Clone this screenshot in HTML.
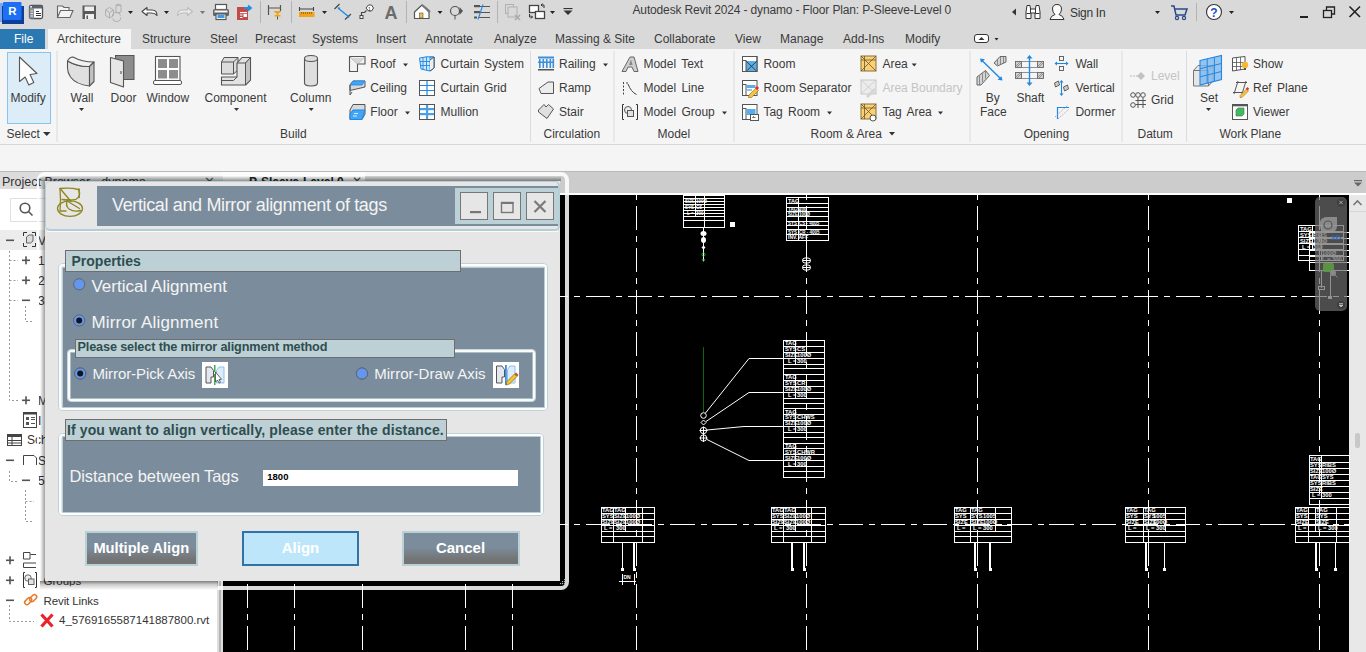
<!DOCTYPE html>
<html><head><meta charset="utf-8">
<style>
*{margin:0;padding:0;box-sizing:border-box}
html,body{width:1366px;height:652px;overflow:hidden;background:#f5f5f5;font-family:"Liberation Sans",sans-serif;color:#333;position:relative}
.a{position:absolute;white-space:nowrap}
.t12{position:absolute;white-space:nowrap;font-size:12px;line-height:12px;color:#3a3a3a}
svg{position:absolute;overflow:visible}
</style></head><body>
<!-- BACKGROUND BLOCKS -->
<div class="a" style="left:0;top:0;width:1366px;height:49px;background:#d9d9d9"></div>
<div class="a" style="left:0;top:29px;width:45px;height:20px;background:#2b79b3"></div>
<div class="a" style="left:48px;top:29px;width:83px;height:20px;background:#f5f5f5"></div>
<div class="a" style="left:0;top:49px;width:1366px;height:96px;background:#f5f5f5;border-bottom:1px solid #d8d8d8"></div>
<div class="a" style="left:0;top:146px;width:1366px;height:25px;background:#f5f5f5"></div>
<!--OPTS-->
<!-- view tab bar -->
<div class="a" style="left:0;top:171px;width:1366px;height:22px;background:#cccccc;border-top:1px solid #b9b9b9"></div>
<div class="a" style="left:222px;top:172px;width:143px;height:21px;background:#f0f0f0"></div>
<div class="a" style="left:222px;top:193px;width:1144px;height:2px;background:#fff"></div>
<!-- project browser -->
<div class="a" style="left:0;top:172px;width:218px;height:17px;background:#dcdcdc"></div>
<div class="t12" style="left:2px;top:176px;color:#333;font-size:12.5px">Project Browser - dynamo</div><div class="a" style="left:204px;top:175px;font-size:13px;line-height:13px;color:#555">&#x2715;</div>
<div class="a" style="left:0;top:189px;width:218px;height:463px;background:#fff"></div>
<div class="a" style="left:10px;top:198px;width:200px;height:24px;background:#fff;border:1px solid #e0e0e0"></div>
<div class="a" style="left:0;top:230px;width:218px;height:20px;background:#ececec"></div>
<div class="a" style="left:217px;top:172px;width:6px;height:480px;background:#dedede"></div>
<div class="a" style="left:219px;top:195px;width:2px;height:457px;background:#b4b4b4"></div>
<svg style="left:0;top:189px" width="222" height="463" viewBox="0 189 222 463">
<g fill="none" stroke="#555" stroke-width="1.6"><circle cx="25" cy="208" r="4.8"/><path d="M28.5 211.5 l4 4"/></g>
<g stroke="#9a9a9a" stroke-width="1" stroke-dasharray="2 2" fill="none">
<path d="M9.5 251 V400.5 H18"/><path d="M9.5 260.5 H18 M9.5 280.5 H18 M9.5 300.5 H18"/>
<path d="M25.5 306 V321.5 H34"/>
<path d="M9.5 471 V481.5 H18"/>
<path d="M25.5 490 V521.5 H34 M25.5 501.5 H34"/>
<path d="M9.5 605 V621.5 H34"/>
</g>
<g fill="#555">
<rect x="6" y="239.5" width="8" height="1.6"/>
<rect x="22" y="259.5" width="8" height="1.6"/><rect x="25.2" y="256.3" width="1.6" height="8"/>
<rect x="22" y="279.5" width="8" height="1.6"/><rect x="25.2" y="276.3" width="1.6" height="8"/>
<rect x="22" y="299.5" width="8" height="1.6"/>
<rect x="22" y="399.5" width="8" height="1.6"/><rect x="25.2" y="396.3" width="1.6" height="8"/>
<rect x="6" y="459.5" width="8" height="1.6"/>
<rect x="22" y="479.5" width="8" height="1.6"/>
<rect x="6" y="559.5" width="8" height="1.6"/><rect x="9.2" y="556.3" width="1.6" height="8"/>
<rect x="6" y="579.5" width="8" height="1.6"/><rect x="9.2" y="576.3" width="1.6" height="8"/>
<rect x="6" y="599.5" width="8" height="1.6"/>
</g>
<!-- views icon -->
<path d="M23.5 236 V232.5 H27 M32 232.5 H35.5 V236 M35.5 243 V246.5 H32 M27 246.5 H23.5 V243" stroke="#333" stroke-width="1" fill="none"/>
<path d="M26.5 237 l2.5 -2 h4 v6 l-2.5 2 h-4z" fill="#ddd" stroke="#555" stroke-width=".9"/>
<!-- sheet icon 420 -->
<rect x="23.5" y="412.5" width="13" height="15" fill="#fff" stroke="#444" stroke-width="1"/><rect x="23.5" y="412.5" width="13" height="2" fill="#444"/>
<g fill="#555"><rect x="26" y="417" width="3" height="3"/><rect x="26" y="422" width="3" height="3"/><rect x="31" y="417" width="4" height="1"/><rect x="31" y="419" width="4" height="1"/><rect x="31" y="423" width="4" height="1"/></g>
<!-- schedule icon 440 -->
<rect x="7.5" y="434.5" width="14" height="11" fill="#fff" stroke="#444" stroke-width="1"/><rect x="7.5" y="434.5" width="14" height="2.5" fill="#444"/>
<path d="M7.5 440.5 H21.5 M7.5 443 H21.5 M12 437 V445.5" stroke="#444" stroke-width="1"/>
<!-- sheet 460 -->
<path d="M23.5 455.5 H34 L36.5 458 V465" fill="none" stroke="#444" stroke-width="1"/><path d="M23.5 455.5 V465" stroke="#444" stroke-width="1"/>
<!-- icon 560 -->
<path d="M23.5 552.5 H30 V559 H23.5 Z M30.5 554.5 H36 M23.5 563 H36 M23.5 563 V567.5 H36" fill="none" stroke="#444" stroke-width="1"/>
<!-- groups icon -->
<path d="M25 572.5 H23.5 V587.5 H25 M35 572.5 H36.5 V587.5 H35" fill="none" stroke="#333" stroke-width="1"/>
<circle cx="28" cy="578" r="3.2" fill="#eee" stroke="#555" stroke-width=".9"/><rect x="28.5" y="579" width="5.5" height="5.5" fill="#e4e4e4" stroke="#555" stroke-width=".9"/>
<!-- link icon -->
<g fill="none" stroke="#e87a2a" stroke-width="1.5"><rect x="24" y="599" width="8" height="4.5" rx="2.2" transform="rotate(-45 28 601)"/><rect x="29" y="596" width="8" height="4.5" rx="2.2" transform="rotate(-45 33 598)"/></g>
<!-- red x -->
<path d="M41.5 614.5 L52.5 626.5 M52.5 614.5 L41.5 626.5" stroke="#e8232a" stroke-width="3.2"/>
</svg>
<div class="t12" style="left:27px;top:434.4px;color:#333">Schedules</div>
<div class="t12" style="left:43.5px;top:594.6px;color:#333;font-size:11.5px;letter-spacing:-0.1px">Revit Links</div>
<div class="t12" style="left:59px;top:613.9px;color:#333;font-size:11.5px">4_5769165587141887800.rvt</div>
<div class="t12" style="left:38px;top:234.6px;color:#333">Views (all)</div>
<div class="t12" style="left:38px;top:254.6px;color:#333">1 - Floor Plans</div>
<div class="t12" style="left:38px;top:274.6px;color:#333">2 - Ceiling Plans</div>
<div class="t12" style="left:38px;top:294.6px;color:#333">3 - Sections</div>
<div class="t12" style="left:38px;top:394.6px;color:#333">M</div>
<div class="t12" style="left:38px;top:414.6px;color:#333">I</div>
<div class="t12" style="left:38px;top:454.6px;color:#333">S</div>
<div class="t12" style="left:38px;top:474.6px;color:#333">5</div>
<div class="t12" style="left:249px;top:175.5px;color:#222;font-weight:bold">P-Sleeve-Level 0</div>
<div class="a" style="left:352px;top:175px;font-size:12px;line-height:12px;color:#444">&#x2715;</div>
<div class="t12" style="left:43.5px;top:574.6px;color:#333;font-size:11.5px">Groups</div>
<!-- scrollbar -->
<div class="a" style="left:1349px;top:195px;width:17px;height:457px;background:#e8e8e8"></div>
<div class="a" style="left:1349px;top:211px;width:17px;height:1px;background:#d6d6d6"></div>
<div class="a" style="left:1355px;top:433px;width:5px;height:15px;background:#c8c8c8;border-radius:2px"></div>
<svg style="left:1349px;top:171px" width="17" height="45" viewBox="1349 171 17 45">
<path d="M1353.5 205 L1357.5 201 L1361.5 205" fill="none" stroke="#777" stroke-width="1.6"/>
<rect x="1354" y="180" width="8" height="1.2" fill="#666"/><path d="M1354 182.5 h8 l-4 4z" fill="#666"/>
</svg>

<!--CANVAS--><div class="a" style="left:223px;top:195px;width:1126px;height:457px;background:#000"></div>
<svg style="left:223px;top:195px" width="1126" height="457" viewBox="223 195 1126 457" shape-rendering="crispEdges">
<path d="M247.5 195V200M247.5 206V230M247.5 236V242M247.5 248V272M247.5 278V284M247.5 290V314M247.5 320V326M247.5 332V356M247.5 362V368M247.5 374V398M247.5 404V410M247.5 416V440M247.5 446V452M247.5 458V482M247.5 488V494M247.5 500V524M247.5 530V536M247.5 542V566M247.5 572V578M247.5 584V608M247.5 614V620M247.5 626V650M294.5 195V200M294.5 206V230M294.5 236V242M294.5 248V272M294.5 278V284M294.5 290V314M294.5 320V326M294.5 332V356M294.5 362V368M294.5 374V398M294.5 404V410M294.5 416V440M294.5 446V452M294.5 458V482M294.5 488V494M294.5 500V524M294.5 530V536M294.5 542V566M294.5 572V578M294.5 584V608M294.5 614V620M294.5 626V650M362.5 195V200M362.5 206V230M362.5 236V242M362.5 248V272M362.5 278V284M362.5 290V314M362.5 320V326M362.5 332V356M362.5 362V368M362.5 374V398M362.5 404V410M362.5 416V440M362.5 446V452M362.5 458V482M362.5 488V494M362.5 500V524M362.5 530V536M362.5 542V566M362.5 572V578M362.5 584V608M362.5 614V620M362.5 626V650M465.5 195V200M465.5 206V230M465.5 236V242M465.5 248V272M465.5 278V284M465.5 290V314M465.5 320V326M465.5 332V356M465.5 362V368M465.5 374V398M465.5 404V410M465.5 416V440M465.5 446V452M465.5 458V482M465.5 488V494M465.5 500V524M465.5 530V536M465.5 542V566M465.5 572V578M465.5 584V608M465.5 614V620M465.5 626V650M512.5 195V200M512.5 206V230M512.5 236V242M512.5 248V272M512.5 278V284M512.5 290V314M512.5 320V326M512.5 332V356M512.5 362V368M512.5 374V398M512.5 404V410M512.5 416V440M512.5 446V452M512.5 458V482M512.5 488V494M512.5 500V524M512.5 530V536M512.5 542V566M512.5 572V578M512.5 584V608M512.5 614V620M512.5 626V650M636.5 195V200M636.5 206V230M636.5 236V242M636.5 248V272M636.5 278V284M636.5 290V314M636.5 320V326M636.5 332V356M636.5 362V368M636.5 374V398M636.5 404V410M636.5 416V440M636.5 446V452M636.5 458V482M636.5 488V494M636.5 500V524M636.5 530V536M636.5 542V566M636.5 572V578M636.5 584V608M636.5 614V620M636.5 626V650M806.5 195V200M806.5 206V230M806.5 236V242M806.5 248V272M806.5 278V284M806.5 290V314M806.5 320V326M806.5 332V356M806.5 362V368M806.5 374V398M806.5 404V410M806.5 416V440M806.5 446V452M806.5 458V482M806.5 488V494M806.5 500V524M806.5 530V536M806.5 542V566M806.5 572V578M806.5 584V608M806.5 614V620M806.5 626V650M977.5 195V200M977.5 206V230M977.5 236V242M977.5 248V272M977.5 278V284M977.5 290V314M977.5 320V326M977.5 332V356M977.5 362V368M977.5 374V398M977.5 404V410M977.5 416V440M977.5 446V452M977.5 458V482M977.5 488V494M977.5 500V524M977.5 530V536M977.5 542V566M977.5 572V578M977.5 584V608M977.5 614V620M977.5 626V650M1148.5 195V200M1148.5 206V230M1148.5 236V242M1148.5 248V272M1148.5 278V284M1148.5 290V314M1148.5 320V326M1148.5 332V356M1148.5 362V368M1148.5 374V398M1148.5 404V410M1148.5 416V440M1148.5 446V452M1148.5 458V482M1148.5 488V494M1148.5 500V524M1148.5 530V536M1148.5 542V566M1148.5 572V578M1148.5 584V608M1148.5 614V620M1148.5 626V650M1319.5 195V200M1319.5 206V230M1319.5 236V242M1319.5 248V272M1319.5 278V284M1319.5 290V314M1319.5 320V326M1319.5 332V356M1319.5 362V368M1319.5 374V398M1319.5 404V410M1319.5 416V440M1319.5 446V452M1319.5 458V482M1319.5 488V494M1319.5 500V524M1319.5 530V536M1319.5 542V566M1319.5 572V578M1319.5 584V608M1319.5 614V620M1319.5 626V650M223.0 296.5H230.9M236.9 296.5H242.9M248.5 296.5H273.0M279.0 296.5H285.0M290.7 296.5H315.2M321.2 296.5H327.2M332.8 296.5H357.3M363.3 296.5H369.3M374.9 296.5H399.4M405.4 296.5H411.4M417.1 296.5H441.6M447.6 296.5H453.6M459.2 296.5H483.8M489.8 296.5H495.8M501.4 296.5H525.9M531.9 296.5H537.9M543.5 296.5H568.0M574.0 296.5H580.0M585.7 296.5H610.2M616.2 296.5H622.2M627.9 296.5H652.4M658.4 296.5H664.4M670.0 296.5H694.5M700.5 296.5H706.5M712.1 296.5H736.6M742.6 296.5H748.6M754.3 296.5H778.8M784.8 296.5H790.8M796.5 296.5H821.0M827.0 296.5H833.0M838.6 296.5H863.1M869.1 296.5H875.1M880.8 296.5H905.2M911.2 296.5H917.2M922.9 296.5H947.4M953.4 296.5H959.4M965.0 296.5H989.5M995.5 296.5H1001.5M1007.2 296.5H1031.7M1037.7 296.5H1043.7M1049.3 296.5H1073.8M1079.8 296.5H1085.8M1091.5 296.5H1116.0M1122.0 296.5H1128.0M1133.7 296.5H1158.2M1164.2 296.5H1170.2M1175.8 296.5H1200.3M1206.3 296.5H1212.3M1217.9 296.5H1242.4M1248.4 296.5H1254.4M1260.1 296.5H1284.6M1290.6 296.5H1296.6M1302.2 296.5H1326.8M1332.8 296.5H1338.8M1344.4 296.5H1349.0M223.0 524.5H230.9M236.9 524.5H242.9M248.5 524.5H273.0M279.0 524.5H285.0M290.7 524.5H315.2M321.2 524.5H327.2M332.8 524.5H357.3M363.3 524.5H369.3M374.9 524.5H399.4M405.4 524.5H411.4M417.1 524.5H441.6M447.6 524.5H453.6M459.2 524.5H483.8M489.8 524.5H495.8M501.4 524.5H525.9M531.9 524.5H537.9M543.5 524.5H568.0M574.0 524.5H580.0M585.7 524.5H610.2M616.2 524.5H622.2M627.9 524.5H652.4M658.4 524.5H664.4M670.0 524.5H694.5M700.5 524.5H706.5M712.1 524.5H736.6M742.6 524.5H748.6M754.3 524.5H778.8M784.8 524.5H790.8M796.5 524.5H821.0M827.0 524.5H833.0M838.6 524.5H863.1M869.1 524.5H875.1M880.8 524.5H905.2M911.2 524.5H917.2M922.9 524.5H947.4M953.4 524.5H959.4M965.0 524.5H989.5M995.5 524.5H1001.5M1007.2 524.5H1031.7M1037.7 524.5H1043.7M1049.3 524.5H1073.8M1079.8 524.5H1085.8M1091.5 524.5H1116.0M1122.0 524.5H1128.0M1133.7 524.5H1158.2M1164.2 524.5H1170.2M1175.8 524.5H1200.3M1206.3 524.5H1212.3M1217.9 524.5H1242.4M1248.4 524.5H1254.4M1260.1 524.5H1284.6M1290.6 524.5H1296.6M1302.2 524.5H1326.8M1332.8 524.5H1338.8M1344.4 524.5H1349.0" stroke="#fff" stroke-width="1.3" fill="none"/>
<rect x="601.5" y="507.5" width="53" height="35" fill="none" stroke="#fff" stroke-width="1"/><path d="M601 513.5H654M601 519.5H654M601 525.5H654M601 531.5H654M601 536.5H654M613.5 507V542M625.5 507V531M642.5 507V542M636.5 531V536" stroke="#fff" stroke-width="1" fill="none"/><text x="602" y="512.3" font-family="Liberation Sans" font-weight="bold" font-size="5.8" fill="#ffffff" shape-rendering="auto">TAG</text><text x="602" y="518.3" font-family="Liberation Sans" font-weight="bold" font-size="5.8" fill="#ffffff" shape-rendering="auto">SYS</text><text x="602" y="524.3" font-family="Liberation Sans" font-weight="bold" font-size="5.8" fill="#ffffff" shape-rendering="auto">SIZE</text><text x="604" y="530.3" font-family="Liberation Sans" font-weight="bold" font-size="5.8" fill="#ffffff" shape-rendering="auto">L =</text><text x="614" y="512.3" font-family="Liberation Sans" font-weight="bold" font-size="5.8" fill="#ffffff" shape-rendering="auto">TAG</text><text x="614" y="518.3" font-family="Liberation Sans" font-weight="bold" font-size="5.8" fill="#ffffff" shape-rendering="auto">SIZE</text><text x="614" y="524.3" font-family="Liberation Sans" font-weight="bold" font-size="5.8" fill="#ffffff" shape-rendering="auto">SIZE</text><text x="616" y="530.3" font-family="Liberation Sans" font-weight="bold" font-size="5.8" fill="#ffffff" shape-rendering="auto">300</text><text x="626" y="512.3" font-family="Liberation Sans" font-weight="bold" font-size="5.8" fill="#ffffff" shape-rendering="auto"></text><text x="626" y="518.3" font-family="Liberation Sans" font-weight="bold" font-size="5.8" fill="#ffffff" shape-rendering="auto">100Ø</text><text x="626" y="524.3" font-family="Liberation Sans" font-weight="bold" font-size="5.8" fill="#ffffff" shape-rendering="auto">100Ø</text><text x="628" y="530.3" font-family="Liberation Sans" font-weight="bold" font-size="5.8" fill="#ffffff" shape-rendering="auto"></text>
<rect x="771.5" y="507.5" width="54" height="35" fill="none" stroke="#fff" stroke-width="1"/><path d="M771 513.5H825M771 519.5H825M771 525.5H825M771 531.5H825M771 536.5H825M783.5 507V542M795.5 507V531M811.5 507V542" stroke="#fff" stroke-width="1" fill="none"/><text x="772" y="512.3" font-family="Liberation Sans" font-weight="bold" font-size="5.8" fill="#ffffff" shape-rendering="auto">TAG</text><text x="772" y="518.3" font-family="Liberation Sans" font-weight="bold" font-size="5.8" fill="#ffffff" shape-rendering="auto">SYS</text><text x="772" y="524.3" font-family="Liberation Sans" font-weight="bold" font-size="5.8" fill="#ffffff" shape-rendering="auto">SIZE</text><text x="774" y="530.3" font-family="Liberation Sans" font-weight="bold" font-size="5.8" fill="#ffffff" shape-rendering="auto">L =</text><text x="784" y="512.3" font-family="Liberation Sans" font-weight="bold" font-size="5.8" fill="#ffffff" shape-rendering="auto">TAG</text><text x="784" y="518.3" font-family="Liberation Sans" font-weight="bold" font-size="5.8" fill="#ffffff" shape-rendering="auto">SIZE</text><text x="784" y="524.3" font-family="Liberation Sans" font-weight="bold" font-size="5.8" fill="#ffffff" shape-rendering="auto">SIZE</text><text x="786" y="530.3" font-family="Liberation Sans" font-weight="bold" font-size="5.8" fill="#ffffff" shape-rendering="auto">300</text><text x="796" y="512.3" font-family="Liberation Sans" font-weight="bold" font-size="5.8" fill="#ffffff" shape-rendering="auto"></text><text x="796" y="518.3" font-family="Liberation Sans" font-weight="bold" font-size="5.8" fill="#ffffff" shape-rendering="auto">100Ø</text><text x="796" y="524.3" font-family="Liberation Sans" font-weight="bold" font-size="5.8" fill="#ffffff" shape-rendering="auto">100Ø</text><text x="798" y="530.3" font-family="Liberation Sans" font-weight="bold" font-size="5.8" fill="#ffffff" shape-rendering="auto"></text>
<rect x="954.5" y="507.5" width="57" height="35" fill="none" stroke="#fff" stroke-width="1"/><path d="M954 513.5H1011M954 519.5H1011M954 525.5H1011M954 531.5H1011M954 536.5H1011M970.5 507V542M995.5 507V531M977.5 531V542" stroke="#fff" stroke-width="1" fill="none"/><text x="955" y="512.3" font-family="Liberation Sans" font-weight="bold" font-size="5.8" fill="#ffffff" shape-rendering="auto">TAG</text><text x="955" y="518.3" font-family="Liberation Sans" font-weight="bold" font-size="5.8" fill="#ffffff" shape-rendering="auto">SYS</text><text x="955" y="524.3" font-family="Liberation Sans" font-weight="bold" font-size="5.8" fill="#ffffff" shape-rendering="auto">SIZE</text><text x="957" y="530.3" font-family="Liberation Sans" font-weight="bold" font-size="5.8" fill="#ffffff" shape-rendering="auto">L =</text><text x="971" y="512.3" font-family="Liberation Sans" font-weight="bold" font-size="5.8" fill="#ffffff" shape-rendering="auto">TAG</text><text x="971" y="518.3" font-family="Liberation Sans" font-weight="bold" font-size="5.8" fill="#ffffff" shape-rendering="auto">SYS</text><text x="971" y="524.3" font-family="Liberation Sans" font-weight="bold" font-size="5.8" fill="#ffffff" shape-rendering="auto">SIZE</text><text x="973" y="530.3" font-family="Liberation Sans" font-weight="bold" font-size="5.8" fill="#ffffff" shape-rendering="auto">L = 300</text><text x="983" y="512.3" font-family="Liberation Sans" font-weight="bold" font-size="5.8" fill="#ffffff" shape-rendering="auto"></text><text x="983" y="518.3" font-family="Liberation Sans" font-weight="bold" font-size="5.8" fill="#ffffff" shape-rendering="auto">1005</text><text x="983" y="524.3" font-family="Liberation Sans" font-weight="bold" font-size="5.8" fill="#ffffff" shape-rendering="auto">100Ø</text><text x="985" y="530.3" font-family="Liberation Sans" font-weight="bold" font-size="5.8" fill="#ffffff" shape-rendering="auto"></text>
<rect x="1125.5" y="507.5" width="60" height="35" fill="none" stroke="#fff" stroke-width="1"/><path d="M1125 513.5H1185M1125 519.5H1185M1125 525.5H1185M1125 531.5H1185M1125 536.5H1185M1143.5 507V542M1165.5 507V531M1148.5 531V542" stroke="#fff" stroke-width="1" fill="none"/><text x="1126" y="512.3" font-family="Liberation Sans" font-weight="bold" font-size="5.8" fill="#ffffff" shape-rendering="auto">TAG</text><text x="1126" y="518.3" font-family="Liberation Sans" font-weight="bold" font-size="5.8" fill="#ffffff" shape-rendering="auto">SYS</text><text x="1126" y="524.3" font-family="Liberation Sans" font-weight="bold" font-size="5.8" fill="#ffffff" shape-rendering="auto">SIZE</text><text x="1128" y="530.3" font-family="Liberation Sans" font-weight="bold" font-size="5.8" fill="#ffffff" shape-rendering="auto">L =</text><text x="1144" y="512.3" font-family="Liberation Sans" font-weight="bold" font-size="5.8" fill="#ffffff" shape-rendering="auto">TAG</text><text x="1144" y="518.3" font-family="Liberation Sans" font-weight="bold" font-size="5.8" fill="#ffffff" shape-rendering="auto">SYS</text><text x="1144" y="524.3" font-family="Liberation Sans" font-weight="bold" font-size="5.8" fill="#ffffff" shape-rendering="auto">SIZE</text><text x="1146" y="530.3" font-family="Liberation Sans" font-weight="bold" font-size="5.8" fill="#ffffff" shape-rendering="auto">L = 300</text><text x="1153" y="512.3" font-family="Liberation Sans" font-weight="bold" font-size="5.8" fill="#ffffff" shape-rendering="auto"></text><text x="1153" y="518.3" font-family="Liberation Sans" font-weight="bold" font-size="5.8" fill="#ffffff" shape-rendering="auto">1005</text><text x="1153" y="524.3" font-family="Liberation Sans" font-weight="bold" font-size="5.8" fill="#ffffff" shape-rendering="auto">100Ø</text><text x="1155" y="530.3" font-family="Liberation Sans" font-weight="bold" font-size="5.8" fill="#ffffff" shape-rendering="auto"></text>
<rect x="1295.5" y="507.5" width="54" height="35" fill="none" stroke="#fff" stroke-width="1"/><path d="M1295 513.5H1349M1295 519.5H1349M1295 525.5H1349M1295 531.5H1349M1295 536.5H1349M1308.5 507V542M1336.5 507V542M1315.5 507V531" stroke="#fff" stroke-width="1" fill="none"/><text x="1296" y="512.3" font-family="Liberation Sans" font-weight="bold" font-size="5.8" fill="#ffffff" shape-rendering="auto">TAG</text><text x="1296" y="518.3" font-family="Liberation Sans" font-weight="bold" font-size="5.8" fill="#ffffff" shape-rendering="auto">SYS</text><text x="1296" y="524.3" font-family="Liberation Sans" font-weight="bold" font-size="5.8" fill="#ffffff" shape-rendering="auto">SIZE</text><text x="1298" y="530.3" font-family="Liberation Sans" font-weight="bold" font-size="5.8" fill="#ffffff" shape-rendering="auto">L =</text><text x="1316" y="512.3" font-family="Liberation Sans" font-weight="bold" font-size="5.8" fill="#ffffff" shape-rendering="auto">TAG</text><text x="1316" y="518.3" font-family="Liberation Sans" font-weight="bold" font-size="5.8" fill="#ffffff" shape-rendering="auto">SYS</text><text x="1316" y="524.3" font-family="Liberation Sans" font-weight="bold" font-size="5.8" fill="#ffffff" shape-rendering="auto">SIZE</text><text x="1318" y="530.3" font-family="Liberation Sans" font-weight="bold" font-size="5.8" fill="#ffffff" shape-rendering="auto">L = 300</text>
<rect x="1309.5" y="455.5" width="40" height="49" fill="none" stroke="#fff" stroke-width="1"/><path d="M1309 462.5H1349M1309 468.5H1349M1309 474.5H1349M1309 480.5H1349M1309 486.5H1349M1309 492.5H1349M1309 498.5H1349M1321.5 455V498" stroke="#fff" stroke-width="1" fill="none"/>
<text x="1310" y="461" font-family="Liberation Sans" font-weight="bold" font-size="5.8" fill="#ffffff" shape-rendering="auto">TAG</text><text x="1310" y="467" font-family="Liberation Sans" font-weight="bold" font-size="5.8" fill="#ffffff" shape-rendering="auto">SYS</text><text x="1322" y="467" font-family="Liberation Sans" font-weight="bold" font-size="5.8" fill="#ffffff" shape-rendering="auto">RIBS</text><text x="1310" y="473" font-family="Liberation Sans" font-weight="bold" font-size="5.8" fill="#ffffff" shape-rendering="auto">SIZE</text><text x="1322" y="473" font-family="Liberation Sans" font-weight="bold" font-size="5.8" fill="#ffffff" shape-rendering="auto">100Ø</text><text x="1310" y="479" font-family="Liberation Sans" font-weight="bold" font-size="5.8" fill="#ffffff" shape-rendering="auto">TAG</text><text x="1322" y="479" font-family="Liberation Sans" font-weight="bold" font-size="5.8" fill="#ffffff" shape-rendering="auto">SYS</text><text x="1310" y="485" font-family="Liberation Sans" font-weight="bold" font-size="5.8" fill="#ffffff" shape-rendering="auto">SYS</text><text x="1322" y="485" font-family="Liberation Sans" font-weight="bold" font-size="5.8" fill="#ffffff" shape-rendering="auto">RIBS</text><text x="1310" y="491" font-family="Liberation Sans" font-weight="bold" font-size="5.8" fill="#ffffff" shape-rendering="auto">SIZE</text><text x="1312" y="497" font-family="Liberation Sans" font-weight="bold" font-size="5.8" fill="#ffffff" shape-rendering="auto">L = 300</text>
<path d="M622.5 543V569M634 543V569M792 543V569M804 543V569M975 543V569M990 543V569M1146 543V569M1164.5 543V569M1316 543V569M1335.5 543V569" stroke="#fff" stroke-width="1.1" fill="none"/>
<rect x="621.0" y="568" width="3" height="3" fill="#fff"/><rect x="632.5" y="568" width="3" height="3" fill="#fff"/><rect x="790.5" y="568" width="3" height="3" fill="#fff"/><rect x="802.5" y="568" width="3" height="3" fill="#fff"/><rect x="973.5" y="568" width="3" height="3" fill="#fff"/><rect x="988.5" y="568" width="3" height="3" fill="#fff"/><rect x="1144.5" y="568" width="3" height="3" fill="#fff"/><rect x="1163.0" y="568" width="3" height="3" fill="#fff"/><rect x="1314.5" y="568" width="3" height="3" fill="#fff"/><rect x="1334.0" y="568" width="3" height="3" fill="#fff"/>
<path d="M619 581.5H636 M622.5 574V585 M634 574V585" stroke="#fff" stroke-width="1" fill="none"/><text x="623.5" y="579" font-family="Liberation Sans" font-weight="bold" font-size="5" fill="#ffffff" shape-rendering="auto">DN</text>
<rect x="783.5" y="340.5" width="41" height="137" fill="none" stroke="#fff" stroke-width="1"/><path d="M783 346.5H824M783 352.5H824M783 358.5H824M783 364.5H824M783 368.5H824M783 374.5H824M783 380.5H824M783 386.5H824M783 392.5H824M783 398.5H824M783 403.5H824M783 408.5H824M783 414.5H824M783 420.5H824M783 426.5H824M783 432.5H824M783 437.5H824M783 443.5H824M783 448.5H824M783 454.5H824M783 460.5H824M783 466.5H824M783 471.5H824M795.5 340V364M795.5 374V398M795.5 408V432M795.5 443V466" stroke="#fff" stroke-width="1" fill="none"/>
<text x="785" y="345.0" font-family="Liberation Sans" font-weight="bold" font-size="5.8" fill="#ffffff" shape-rendering="auto">TAG</text><text x="785" y="350.8" font-family="Liberation Sans" font-weight="bold" font-size="5.8" fill="#ffffff" shape-rendering="auto">SYS</text><text x="797" y="350.8" font-family="Liberation Sans" font-weight="bold" font-size="5.8" fill="#ffffff" shape-rendering="auto">CS</text><text x="785" y="356.8" font-family="Liberation Sans" font-weight="bold" font-size="5.8" fill="#ffffff" shape-rendering="auto">SIZE</text><text x="797" y="356.8" font-family="Liberation Sans" font-weight="bold" font-size="5.8" fill="#ffffff" shape-rendering="auto">100Ø</text><text x="788" y="362.8" font-family="Liberation Sans" font-weight="bold" font-size="5.8" fill="#ffffff" shape-rendering="auto">L =</text><text x="797" y="362.8" font-family="Liberation Sans" font-weight="bold" font-size="5.8" fill="#ffffff" shape-rendering="auto">300</text><text x="785" y="379.25" font-family="Liberation Sans" font-weight="bold" font-size="5.8" fill="#ffffff" shape-rendering="auto">TAG</text><text x="785" y="385.05" font-family="Liberation Sans" font-weight="bold" font-size="5.8" fill="#ffffff" shape-rendering="auto">SYS</text><text x="797" y="385.05" font-family="Liberation Sans" font-weight="bold" font-size="5.8" fill="#ffffff" shape-rendering="auto">CR</text><text x="785" y="391.05" font-family="Liberation Sans" font-weight="bold" font-size="5.8" fill="#ffffff" shape-rendering="auto">SIZE</text><text x="797" y="391.05" font-family="Liberation Sans" font-weight="bold" font-size="5.8" fill="#ffffff" shape-rendering="auto">100Ø</text><text x="788" y="397.05" font-family="Liberation Sans" font-weight="bold" font-size="5.8" fill="#ffffff" shape-rendering="auto">L =</text><text x="797" y="397.05" font-family="Liberation Sans" font-weight="bold" font-size="5.8" fill="#ffffff" shape-rendering="auto">300</text><text x="785" y="413.5" font-family="Liberation Sans" font-weight="bold" font-size="5.8" fill="#ffffff" shape-rendering="auto">TAG</text><text x="785" y="419.3" font-family="Liberation Sans" font-weight="bold" font-size="5.8" fill="#ffffff" shape-rendering="auto">SYS</text><text x="797" y="419.3" font-family="Liberation Sans" font-weight="bold" font-size="5.8" fill="#ffffff" shape-rendering="auto">CHWS</text><text x="785" y="425.3" font-family="Liberation Sans" font-weight="bold" font-size="5.8" fill="#ffffff" shape-rendering="auto">SIZE</text><text x="797" y="425.3" font-family="Liberation Sans" font-weight="bold" font-size="5.8" fill="#ffffff" shape-rendering="auto">100Ø</text><text x="788" y="431.3" font-family="Liberation Sans" font-weight="bold" font-size="5.8" fill="#ffffff" shape-rendering="auto">L =</text><text x="797" y="431.3" font-family="Liberation Sans" font-weight="bold" font-size="5.8" fill="#ffffff" shape-rendering="auto">300</text><text x="785" y="447.75" font-family="Liberation Sans" font-weight="bold" font-size="5.8" fill="#ffffff" shape-rendering="auto">TAG</text><text x="785" y="453.55" font-family="Liberation Sans" font-weight="bold" font-size="5.8" fill="#ffffff" shape-rendering="auto">SYS</text><text x="797" y="453.55" font-family="Liberation Sans" font-weight="bold" font-size="5.8" fill="#ffffff" shape-rendering="auto">CHWR</text><text x="785" y="459.55" font-family="Liberation Sans" font-weight="bold" font-size="5.8" fill="#ffffff" shape-rendering="auto">SIZE</text><text x="797" y="459.55" font-family="Liberation Sans" font-weight="bold" font-size="5.8" fill="#ffffff" shape-rendering="auto">100Ø</text><text x="788" y="465.55" font-family="Liberation Sans" font-weight="bold" font-size="5.8" fill="#ffffff" shape-rendering="auto">L =</text><text x="797" y="465.55" font-family="Liberation Sans" font-weight="bold" font-size="5.8" fill="#ffffff" shape-rendering="auto">300</text>
<path d="M703.5 347V412" stroke="#0a6a0a" stroke-width="1" fill="none"/>
<g fill="none" stroke="#fff" stroke-width="1" shape-rendering="auto"><circle cx="703.5" cy="415.5" r="2.8"/><path d="M703.5 420l2.5 2.5-2.5 2.5-2.5-2.5z" stroke="#fff"/><circle cx="703.5" cy="430.5" r="3.2"/><path d="M699.5 430.5h8M703.5 426.5v8"/><circle cx="703.5" cy="438" r="3.2"/><path d="M699.5 438h8M703.5 434v8"/><path d="M705.5 413 L749 358.5 H783 M706 421.5 L749 392.5 H783 M707 430 L744 426.5 H783 M707 439.5 L749 460.5 H783"/></g>
<rect x="683.5" y="195.5" width="41" height="32" fill="none" stroke="#fff" stroke-width="1"/><path d="M683 198.5H724M683 201.5H724M683 204.5H724M683 207.5H724M683 210.5H724M683 213.5H724M683 216.5H724M683 220.5H724M695.5 195V216M704.5 195V227" stroke="#fff" stroke-width="1" fill="none"/>
<text x="685" y="203" font-family="Liberation Sans" font-weight="bold" font-size="4.5" fill="#ffffff" shape-rendering="auto">SIZE</text><text x="696" y="203" font-family="Liberation Sans" font-weight="bold" font-size="4.5" fill="#ffffff" shape-rendering="auto">100Ø</text><text x="685" y="209" font-family="Liberation Sans" font-weight="bold" font-size="4.5" fill="#ffffff" shape-rendering="auto">SYS</text><text x="696" y="209" font-family="Liberation Sans" font-weight="bold" font-size="4.5" fill="#ffffff" shape-rendering="auto">CS</text><text x="687" y="215" font-family="Liberation Sans" font-weight="bold" font-size="4.5" fill="#ffffff" shape-rendering="auto">L =</text><text x="696" y="215" font-family="Liberation Sans" font-weight="bold" font-size="4.5" fill="#ffffff" shape-rendering="auto">300</text>
<path d="M703.5 227V261" stroke="#fff" stroke-width="1" fill="none"/>
<g fill="#fff" shape-rendering="auto"><ellipse cx="703.5" cy="233.5" rx="3" ry="2.5"/><ellipse cx="703.5" cy="240" rx="2.5" ry="3"/><path d="M703.5 245.5l2 2-2 2-2-2z"/></g><g fill="none" stroke="#3c3" stroke-width=".8" shape-rendering="auto"><circle cx="703.5" cy="254.5" r="1.6"/><path d="M702.3 259.5h2.4l-1.2 2z"/></g>
<rect x="730" y="222" width="5" height="5" fill="#fff"/>
<rect x="786.5" y="197.5" width="42" height="43" fill="none" stroke="#fff" stroke-width="1"/><path d="M786 203.5H828M786 207.5H828M786 211.5H828M786 216.5H828M786 221.5H828M786 225.5H828M786 229.5H828M786 234.5H828M798.5 197V240" stroke="#fff" stroke-width="1" fill="none"/>
<text x="788" y="202.5" font-family="Liberation Sans" font-weight="bold" font-size="5.5" fill="#ffffff" shape-rendering="auto">TAG</text><text x="788" y="210.5" font-family="Liberation Sans" font-weight="bold" font-size="4.5" fill="#ffffff" shape-rendering="auto">TAGS</text><text x="799" y="210.5" font-family="Liberation Sans" font-weight="bold" font-size="4.5" fill="#ffffff" shape-rendering="auto">100</text><text x="788" y="215.5" font-family="Liberation Sans" font-weight="bold" font-size="4.5" fill="#ffffff" shape-rendering="auto">SIZE</text><text x="799" y="215.5" font-family="Liberation Sans" font-weight="bold" font-size="4.5" fill="#ffffff" shape-rendering="auto">100Ø</text><text x="788" y="224.5" font-family="Liberation Sans" font-weight="bold" font-size="4.5" fill="#ffffff" shape-rendering="auto">SYS</text><text x="799" y="224.5" font-family="Liberation Sans" font-weight="bold" font-size="4.5" fill="#ffffff" shape-rendering="auto">CS · 4005</text><text x="788" y="233.5" font-family="Liberation Sans" font-weight="bold" font-size="4.5" fill="#ffffff" shape-rendering="auto">SYS</text><text x="799" y="233.5" font-family="Liberation Sans" font-weight="bold" font-size="4.5" fill="#ffffff" shape-rendering="auto">CR · 4005</text><text x="788" y="239" font-family="Liberation Sans" font-weight="bold" font-size="5" fill="#ffffff" shape-rendering="auto">INV. AFF</text>
<path d="M806.5 240V272" stroke="#fff" stroke-width="1" fill="none"/>
<g fill="none" stroke="#fff" stroke-width="1" shape-rendering="auto"><rect x="802.5" y="258" width="8" height="5" rx="2.5"/><path d="M802.5 260.5h8"/><rect x="802.5" y="265" width="8" height="5" rx="2.5"/><path d="M802.5 267.5h8"/></g>
<rect x="1287" y="198" width="4.5" height="4.5" fill="#fff"/>
<rect x="1298.5" y="225.5" width="45" height="35" fill="none" stroke="#fff" stroke-width="1"/><path d="M1298 231.5H1343M1298 237.5H1343M1298 243.5H1343M1298 249.5H1343M1298 255.5H1343M1312.5 225V249M1321.5 225V260" stroke="#fff" stroke-width="1" fill="none"/>
<rect x="1309.5" y="232.5" width="40" height="38" fill="none" stroke="#fff" stroke-width="1"/><path d="M1309 238.5H1349M1309 244.5H1349M1309 250.5H1349M1309 256.5H1349M1309 262.5H1349" stroke="#fff" stroke-width="1" fill="none"/>
<text x="1300" y="230.5" font-family="Liberation Sans" font-weight="bold" font-size="5.8" fill="#ffffff" shape-rendering="auto">TAG</text><text x="1300" y="236.5" font-family="Liberation Sans" font-weight="bold" font-size="5.8" fill="#ffffff" shape-rendering="auto">SYS</text><text x="1313" y="236.5" font-family="Liberation Sans" font-weight="bold" font-size="5.8" fill="#ffffff" shape-rendering="auto">RIBS</text><text x="1300" y="242.5" font-family="Liberation Sans" font-weight="bold" font-size="5.8" fill="#ffffff" shape-rendering="auto">SIZE</text><text x="1313" y="242.5" font-family="Liberation Sans" font-weight="bold" font-size="5.8" fill="#ffffff" shape-rendering="auto">100Ø</text><text x="1302" y="248.5" font-family="Liberation Sans" font-weight="bold" font-size="5.8" fill="#ffffff" shape-rendering="auto">L =</text><text x="1313" y="248.5" font-family="Liberation Sans" font-weight="bold" font-size="5.8" fill="#ffffff" shape-rendering="auto">300</text><text x="1322" y="254.5" font-family="Liberation Sans" font-weight="bold" font-size="5.8" fill="#ffffff" shape-rendering="auto">100Ø</text><text x="1322" y="260.5" font-family="Liberation Sans" font-weight="bold" font-size="5.8" fill="#ffffff" shape-rendering="auto">L = 300</text>
<path d="M1321 270V288 M1330 275V298" stroke="#fff" stroke-width="1" fill="none"/><rect x="1318" y="286" width="6" height="3" fill="none" stroke="#fff" stroke-width="1"/><rect x="1328" y="296" width="4" height="3" fill="#fff"/>
</svg>
<svg style="left:1314px;top:196px" width="35" height="117" viewBox="1314 196 35 117">
<rect x="1315" y="197" width="32" height="114" rx="5" fill="#6a6a6a" fill-opacity=".72"/>
<circle cx="1341" cy="202.5" r="4" fill="#3e3e3e"/><path d="M1339.3 200.8l3.4 3.4M1342.7 200.8l-3.4 3.4" stroke="#bbb" stroke-width=".9"/>
<path d="M1320 222 Q1321 217 1328 217 H1337 V226 Q1337 233 1329 233 Q1320 233 1320 226Z" fill="#9a9a9a" fill-opacity=".8"/>
<circle cx="1328" cy="225" r="4" fill="none" stroke="#555" stroke-width="1.2"/>
<text x="1331" y="239.5" font-family="Liberation Sans" font-weight="bold" font-size="8" fill="#2f63b0">2D</text>
<rect x="1323" y="263" width="11" height="9" rx="1.5" fill="#5e9a44" fill-opacity=".9"/>
<circle cx="1333" cy="273" r="3" fill="#8a8a8a"/><path d="M1335 275l2.5 2.5" stroke="#8a8a8a" stroke-width="1"/>
<circle cx="1341" cy="305" r="4" fill="#3e3e3e"/><path d="M1339 303.5h4M1339 305h4l-2 2z" stroke="#bbb" stroke-width=".8" fill="#bbb"/>
</svg><!--/CANVAS-->
<svg style="left:0;top:0" width="1366" height="146" viewBox="0 0 1366 146">
<!-- R logo -->
<rect x="0" y="3" width="4" height="19" fill="#7aa6ee"/>
<rect x="2" y="6" width="22" height="18" fill="#0c3f9a"/>
<rect x="3" y="2" width="18.5" height="18" rx="1" fill="#1d6ff3"/>
<text x="12.3" y="15.2" font-family="Liberation Sans" font-weight="bold" font-size="11.5" fill="#fff" text-anchor="middle">R</text>
<!-- app menu -->
<rect x="29.5" y="5.5" width="13" height="13" rx="1.5" fill="#fff" stroke="#4a4f57" stroke-width="1.3"/>
<rect x="29.5" y="5.5" width="13" height="3" fill="#5d636b"/>
<rect x="29.5" y="8" width="4.5" height="10.5" fill="#8a9099"/>
<rect x="30" y="6" width="2" height="1.6" fill="#cfe9ff"/>
<rect x="30.6" y="10.5" width="2.4" height="1" fill="#e8e8e8"/><rect x="30.6" y="13" width="2.4" height="1" fill="#e8e8e8"/><rect x="30.6" y="15.5" width="2.4" height="1" fill="#e8e8e8"/>
<rect x="36" y="11" width="3" height="1" fill="#333"/><rect x="36" y="13" width="5" height="1" fill="#333"/><rect x="36" y="15" width="5" height="1" fill="#333"/>
<!-- open -->
<path d="M57.5 17.5 V6 h5 l1.5 1.5 h5 v3" fill="#f3f3f3" stroke="#666" stroke-width="1.1"/>
<path d="M57.5 17.5 L60.5 10.5 H73 L70 17.5 Z" fill="#f3f3f3" stroke="#666" stroke-width="1.1"/>
<!-- save -->
<rect x="82.5" y="5.5" width="13.5" height="13.5" fill="#5a5a5a"/>
<rect x="84.5" y="6.5" width="9.5" height="4.5" fill="#eee"/>
<rect x="85" y="14" width="9" height="5" fill="#eee"/>
<rect x="86.5" y="15.5" width="1.5" height="3.5" fill="#5a5a5a"/>
<!-- sync greyed -->
<g fill="none" stroke="#b0b0b0" stroke-width="1">
<path d="M105.5 10 L109.5 7.5 L113.5 10 V15.5 L109.5 18 L105.5 15.5 Z M105.5 10 L109.5 12.5 L113.5 10 M109.5 12.5 V18"/>
<path d="M116 5 Q118.5 3.5 121 5 V12 Q118.5 13.5 116 12 Z M116 5 Q118.5 6.5 121 5"/>
<path d="M112.5 16.5 A4 3.5 0 0 1 120.5 15.5 M120.5 17.5 A4 3.5 0 0 1 112.5 18.5"/>
</g>
<!-- dropdowns -->
<g fill="#222">
<path d="M128 11 h5 l-2.5 3z"/><path d="M164 11 h5 l-2.5 3z"/><path d="M200 11 h5 l-2.5 3z" fill="#777"/>
<path d="M322 11 h5 l-2.5 3z"/><path d="M437.5 11 h5 l-2.5 3z"/><path d="M550 11 h5 l-2.5 3z"/>
<path d="M1155 11 h5 l-2.5 3z"/><path d="M1229 11 h5 l-2.5 3z"/>
<path d="M994.5 38 h4 l-2 2.5z"/>
</g>
<!-- undo -->
<path d="M142 11.5 L147 7.5 V10 H152 Q157 10 157 15.5 Q155 13 151.5 13 H147 V15.5 Z" fill="#fff" stroke="#444" stroke-width="1.1" stroke-linejoin="round"/>
<!-- redo greyed -->
<path d="M192.5 11.5 L187.5 7.5 V10 H182 Q177.5 10 177.5 15.5 Q179.5 13 183 13 H187.5 V15.5 Z" fill="#e8e8e8" stroke="#bdbdbd" stroke-width="1.1" stroke-linejoin="round"/>
<!-- print -->
<rect x="215.5" y="4.5" width="11" height="5" fill="#fff" stroke="#555" stroke-width="1.2"/>
<rect x="213" y="9" width="16" height="7" rx="1.5" fill="#666"/>
<rect x="214.5" y="10.5" width="13" height="2" fill="#f5f5f5"/>
<rect x="216" y="14" width="10" height="5.5" fill="#fff" stroke="#555" stroke-width="1.2"/>
<rect x="217.5" y="15" width="7" height="3" fill="#3d9ae8"/>
<!-- export red -->
<path d="M237 7 h8 l3 2 v11 h-11z" fill="#c44a4a"/>
<rect x="240" y="12" width="7" height="1.2" fill="#fff"/><rect x="240" y="14.5" width="2.5" height="1" fill="#fff"/><rect x="243.5" y="14" width="3.5" height="3" fill="#fff"/><rect x="240" y="17" width="2.5" height="1" fill="#fff"/>
<path d="M244 8 h6 M248 5.5 l3 2.5 -3 2.5" stroke="#1e8fe8" stroke-width="1.8" fill="none"/>
<!-- separators -->
<g fill="#b3b3b3"><rect x="260" y="1" width="1" height="22"/><rect x="291" y="1" width="1" height="22"/><rect x="406" y="1" width="1" height="22"/><rect x="497" y="1" width="1" height="22"/><rect x="1196" y="3" width="1" height="18"/></g>
<!-- dim pin -->
<path d="M268.5 5 v10 M268.5 8 h12 M280.5 5 v6" stroke="#555" stroke-width="1.2" fill="none"/>
<path d="M274 11 h7 l-1 2 h-1.5 v2 h2 v1.5 h-6 v-1.5 h2 v-2 h-1.5z" fill="#f0a418"/><rect x="277" y="16.5" width="1" height="3" fill="#555"/>
<!-- measure -->
<path d="M299.5 7 v4 M299.5 9 h14 M313.5 7 v4" stroke="#444" stroke-width="1.1" fill="none"/>
<rect x="299" y="12" width="15.5" height="5" fill="#f0a418"/>
<g fill="#946200"><rect x="301" y="12" width=".8" height="2"/><rect x="303" y="12" width=".8" height="2"/><rect x="305" y="12" width=".8" height="2"/><rect x="307" y="12" width=".8" height="2"/><rect x="309" y="12" width=".8" height="2"/><rect x="311" y="12" width=".8" height="2"/></g>
<!-- aligned dim -->
<path d="M338 8 l11 9" stroke="#1e88e5" stroke-width="1.3"/><path d="M334.5 9 l5 -5 M345 19.5 l6 -5.5" stroke="#444" stroke-width="1.1"/>
<path d="M337.5 7.3 l3 .5 -1.5 2z M349.5 17.7 l-3 -.5 1.5 -2z" fill="#1e88e5"/>
<!-- tag -->
<path d="M361.5 17.5 v-5 h3 l2 -2" stroke="#444" stroke-width="1.1" fill="none"/><rect x="360" y="15.5" width="3" height="3" fill="#fff" stroke="#444" stroke-width="1"/>
<path d="M366 8 l2.5 -3 h3 l2 3 -2 3 h-3z" fill="#fff" stroke="#444" stroke-width="1"/><text x="369.5" y="10.5" font-family="Liberation Sans" font-size="5" fill="#333" text-anchor="middle">1</text>
<!-- A text -->
<text x="391" y="19" font-family="Liberation Sans" font-weight="bold" font-size="18" fill="#6b6b6b" text-anchor="middle">A</text>
<!-- home -->
<path d="M414.5 12 l7.5 -7 7 7 v6.5 h-14.5z" fill="#fff" stroke="#555" stroke-width="1.2" stroke-linejoin="round"/><path d="M422 5 l5 4 3 3" stroke="#777" stroke-width="2" fill="none"/>
<rect x="419.5" y="13" width="3.5" height="5" fill="#f0c040" stroke="#555" stroke-width=".6"/>
<!-- section -->
<circle cx="455" cy="11" r="4.5" fill="none" stroke="#555" stroke-width="1.2"/><path d="M459.5 7 l3.5 4 -3.5 4z" fill="#555"/><rect x="454.5" y="15.5" width="1" height="4" fill="#555"/>
<!-- thin lines -->
<g fill="#555"><rect x="474" y="5" width="6" height="2.2"/><rect x="474" y="11" width="6" height="2.2"/><rect x="474" y="16.5" width="3" height="2"/><rect x="479" y="6" width="11" height="1"/><rect x="480" y="12" width="10" height="1"/><rect x="479" y="17" width="11" height="1"/></g>
<path d="M478 19.5 l5 -15" stroke="#1e88e5" stroke-width="1.1"/>
<!-- close hidden greyed -->
<g fill="none" stroke="#b0b0b0" stroke-width="1"><rect x="505.5" y="4.5" width="8" height="9"/><rect x="508" y="7" width="9" height="10" fill="#d9d9d9"/></g>
<path d="M515 15 l5 5 M520 15 l-5 5" stroke="#aaa" stroke-width="1.6"/>
<!-- switch windows -->
<rect x="529.5" y="5.5" width="9" height="7" fill="#fff" stroke="#444" stroke-width="1.3"/><rect x="535.5" y="11.5" width="9" height="7" fill="#fff" stroke="#444" stroke-width="1.3"/>
<path d="M541 5 h3 v3 M542.5 3.5 l-1.5 1.5 1.5 1.5 M529.5 14 v3 h3 M531 15.5 l1.5 1.5 -1.5 1.5" stroke="#333" stroke-width="1" fill="none"/>
<!-- customize -->
<rect x="563.5" y="8" width="9" height="1.1" fill="#333"/><path d="M563.5 10.5 h9 l-4.5 4.5z" fill="#333"/>
<!-- right side -->
<path d="M1016 8.5 v7 l-4 -3.5z" fill="#333"/>
<g fill="#fff" stroke="#333" stroke-width="1"><path d="M1026 12 v6.5 h5 v-6.5 l-1 -6.5 h-3z"/><path d="M1035 12 v6.5 h5 v-6.5 l-1 -6.5 h-3z"/><rect x="1030.5" y="9" width="5" height="4"/></g>
<rect x="1026.5" y="13" width="4" height="1" fill="#333"/><rect x="1035.5" y="13" width="4" height="1" fill="#333"/>
<path d="M1050 19.5 q1 -4 5 -5 q-2.5 -2 -2.5 -5.5 q0 -4.5 4.5 -4.5 q4.5 0 4.5 4.5 q0 3.5 -2.5 5.5 q4 1 5 5z" fill="#fafafa" stroke="#333" stroke-width="1"/>
<!-- cart -->
<path d="M1171 6 h3 l2 9 h9 l2 -6 h-12" fill="none" stroke="#2a4a8a" stroke-width="1.5"/><circle cx="1177" cy="18" r="1.6" fill="none" stroke="#2a4a8a" stroke-width="1.2"/><circle cx="1184" cy="18" r="1.6" fill="none" stroke="#2a4a8a" stroke-width="1.2"/>
<!-- help -->
<circle cx="1214" cy="12" r="7.5" fill="#fff" stroke="#333" stroke-width="1.1"/><text x="1214" y="16.5" font-family="Liberation Sans" font-weight="bold" font-size="12" fill="#1b4fc0" text-anchor="middle">?</text>
<!-- window controls -->
<rect x="1300" y="16" width="8" height="2" fill="#222"/>
<rect x="1323.5" y="10.5" width="8" height="7" fill="none" stroke="#222" stroke-width="1.3"/><path d="M1326.5 10 v-3 h8 v7 h-3" fill="none" stroke="#222" stroke-width="1.3"/>
<path d="M1349.5 6.5 l10.5 10.5 M1360 6.5 l-10.5 10.5" stroke="#222" stroke-width="1.6"/>
<!-- ribbon toggle in tabs -->
<rect x="974.5" y="34.5" width="14" height="8" rx="2.5" fill="#fff" stroke="#333" stroke-width="1"/><path d="M978.5 40 h6 l-3 -3z" fill="#333"/>
</svg>


<svg style="left:0;top:0" width="1366" height="146" viewBox="0 0 1366 146">
<!-- modify button -->
<rect x="7.5" y="52.5" width="43" height="71" fill="#ddedf7" stroke="#86c6ea" stroke-width="1"/>
<path d="M19.5 57 L37 73.5 L30 74.5 L33.8 82.5 L28.8 85 L25.2 77 L19.5 81.5 Z" fill="#fff" stroke="#555" stroke-width="1.1" stroke-linejoin="round"/>
<g fill="#333">
<path d="M43 132 h7.5 l-3.75 4z"/>
<path d="M79 108 h5 l-2.5 3z"/><path d="M234 108 h5 l-2.5 3z"/><path d="M308.7 108 h5 l-2.5 3z"/>
<path d="M403 63.5 h5 l-2.5 3z"/><path d="M405 111.5 h5 l-2.5 3z"/>
<path d="M603 63.5 h5 l-2.5 3z"/><path d="M722 111.5 h5 l-2.5 3z"/>
<path d="M827 111.5 h5 l-2.5 3z"/><path d="M911.7 63.5 h5 l-2.5 3z"/><path d="M938 111.5 h5 l-2.5 3z"/>
<path d="M889 132 h6 l-3 3.5z"/><path d="M1206 108 h5 l-2.5 3z"/>
</g>
<!-- panel separators -->
<g fill="#dcdcdc"><rect x="56.5" y="51" width="1" height="91"/><rect x="530" y="51" width="1" height="91"/><rect x="613.5" y="51" width="1" height="91"/><rect x="733.5" y="51" width="1" height="91"/><rect x="969.5" y="51" width="1" height="91"/><rect x="1121.5" y="51" width="1" height="91"/><rect x="1186" y="51" width="1" height="91"/></g>
<!-- wall -->
<path d="M67.5 61 Q78 67 89.5 66.5 V86 Q76 84.5 70.5 77 Q67.5 72.5 67.5 68 Z" fill="#e0e0e0" stroke="#555" stroke-width="1.1" stroke-linejoin="round"/>
<path d="M67.5 61 Q69.5 57 73 57 Q82 62 94 62 L89.5 66.5 Q78 67 67.5 61 Z" fill="#f2f2f2" stroke="#555" stroke-width="1.1" stroke-linejoin="round"/>
<path d="M89.5 66.5 L94 62 V81.5 L89.5 86 Z" fill="#c2c2c2" stroke="#555" stroke-width="1.1" stroke-linejoin="round"/>
<!-- door -->
<rect x="115.5" y="55.5" width="18.5" height="24" fill="#8c8c8c" stroke="#555" stroke-width="1"/>
<path d="M110.5 57.5 L123.5 61 V87 L110.5 82.5 Z" fill="#e6e6e6" stroke="#555" stroke-width="1.1" stroke-linejoin="round"/>
<rect x="120.5" y="71" width="1" height="3" fill="#444"/>
<!-- window -->
<rect x="155.5" y="56.5" width="24.5" height="24" fill="#fff" stroke="#555" stroke-width="1.1"/>
<g fill="#8c8c8c"><rect x="158" y="59" width="9" height="9"/><rect x="169" y="59" width="9" height="9"/><rect x="158" y="70" width="9" height="8.5"/><rect x="169" y="70" width="9" height="8.5"/></g>
<rect x="153.5" y="80.5" width="28" height="4" rx="1.5" fill="#fff" stroke="#555" stroke-width="1"/>
<!-- component -->
<path d="M221.5 62 L224 57.5 H238 V70 L233.5 74 H221.5 Z" fill="#dcdcdc" stroke="#555" stroke-width="1"/>
<path d="M221.5 62 H233.5 V74 M233.5 62 L238 57.5" fill="none" stroke="#555" stroke-width="1"/>
<path d="M221.5 77 H237 V63 L242 57.5 H250.5 V80 L245.5 85 H221.5 Z" fill="#e2e2e2" stroke="#555" stroke-width="1.1" stroke-linejoin="round"/>
<path d="M237 77 L233.5 80.5 H221.5 M245.5 85 V63 H237 M245.5 63 L250.5 57.5" fill="none" stroke="#555" stroke-width="1"/>
<path d="M245.5 63 L250.5 57.5 V80 L245.5 85z" fill="#c4c4c4" stroke="#555" stroke-width="1"/>
<!-- column -->
<path d="M304.5 58.5 Q304.5 55.5 311 55.5 Q317.5 55.5 317.5 58.5 V83 Q317.5 86 311 86 Q304.5 86 304.5 83 Z" fill="#dedede" stroke="#555" stroke-width="1.1"/>
<path d="M304.5 58.5 Q304.5 61.5 311 61.5 Q317.5 61.5 317.5 58.5" fill="none" stroke="#555" stroke-width="1"/>
<!-- roof -->
<path d="M349.5 56.5 H365 V64 L357.5 64 V71.5 H349.5 Z" fill="#f2f2f2" stroke="#555" stroke-width="1.1"/>
<path d="M349.5 56.5 L357.5 64 M365 56.5 L357.5 64" stroke="#999" stroke-width=".8"/>
<path d="M351 58 h12 l-5.5 5.5z" fill="#d5d5d5"/>
<!-- ceiling -->
<path d="M350 85 L353 81 H365 V87 L350 90.5 Z" fill="#d6d6d6" stroke="#555" stroke-width="1"/>
<path d="M350 85 L353 81 H365 L362 85 Z" fill="#42a5f5" stroke="#1e88e5" stroke-width=".8"/>
<path d="M350 85 V95 L352 92" stroke="#555" stroke-width="1" fill="none"/>
<!-- floor -->
<path d="M350 110 L353 104.5 H365 V114 L362 119.5 H350 Z" fill="#d9d9d9" stroke="#555" stroke-width="1"/>
<path d="M350 114 L353 110 H365 L362 119.5 H350 Z" fill="#42a5f5" stroke="#1e88e5" stroke-width="1"/>
<path d="M354 113.5 h4 M357 116 h-4" stroke="#fff" stroke-width=".8"/>
<!-- curtain system -->
<path d="M419.5 58 Q427 56 434 57 V68 L430 71 Q425 70 421 69 Z" fill="#cfe6fb" stroke="#1e88e5" stroke-width="1"/>
<path d="M423 58 V69.5 M426.5 57 V70 M430 57 V71 M420 61.5 H430 M420.5 65.5 H430 M430 57 L434 57 V68 L430 71" fill="none" stroke="#1e88e5" stroke-width=".9"/>
<path d="M430 60 L434 57 V68 L430 71" fill="#eee" stroke="#555" stroke-width="1"/>
<!-- curtain grid -->
<rect x="419.5" y="80.5" width="15" height="15" fill="#fff" stroke="#555" stroke-width="1"/>
<path d="M427 81 V95 M420 85.5 H434 M420 90.5 H434" stroke="#1e88e5" stroke-width="1.2"/>
<!-- mullion -->
<rect x="419.5" y="104.5" width="15" height="15" fill="#fff" stroke="#555" stroke-width="1"/>
<rect x="420" y="108" width="14" height="2.2" fill="#4aa0e6"/><rect x="420" y="113" width="14" height="2.2" fill="#4aa0e6"/><rect x="426" y="105" width="2.2" height="14" fill="#4aa0e6"/>
<!-- railing -->
<rect x="538" y="56.5" width="16" height="2" fill="#3d8fd8"/>
<g fill="#3d8fd8"><rect x="539" y="59" width="1.6" height="9"/><rect x="542.5" y="59" width="1.6" height="9"/><rect x="546" y="59" width="1.6" height="9"/><rect x="549.5" y="59" width="1.6" height="9"/><rect x="552.5" y="59" width="1.6" height="9"/><rect x="538" y="61.5" width="16" height="1.5"/></g>
<rect x="538" y="69" width="16" height="1.5" fill="#555"/>
<!-- ramp -->
<path d="M539 88.5 L548 82 H553.5 V93.5 H541 Z" fill="#ececec" stroke="#555" stroke-width="1" stroke-linejoin="round"/>
<!-- stair -->
<path d="M538.5 110 L544 104.5 L546 107 L548.5 104.5 L553.5 109 L547 118.5 L538.5 112 Z" fill="#e0e0e0" stroke="#555" stroke-width="1" stroke-linejoin="round"/>
<!-- model text -->
<path d="M622 71.5 L630 57 H634 L638 71.5 H634 L632 67 H628 L626 71.5 Z" fill="#cfcfcf" stroke="#666" stroke-width="1"/>
<path d="M629 65 L631 59.5 L632.5 65 Z" fill="#888"/>
<!-- model line -->
<path d="M623.5 82 V95 M627 82 V84" stroke="#444" stroke-width="1" stroke-dasharray="2 1.5"/>
<path d="M628 84 Q631 92 636.5 94.5" fill="none" stroke="#444" stroke-width="1"/>
<!-- model group -->
<path d="M624 104.5 H622.5 V119.5 H624 M636 104.5 H637.5 V119.5 H636" fill="none" stroke="#333" stroke-width="1"/>
<circle cx="628" cy="110" r="3.5" fill="#eee" stroke="#555" stroke-width="1"/><rect x="627.5" y="110.5" width="6" height="6" fill="#e0e0e0" stroke="#555" stroke-width="1"/>
<!-- room -->
<rect x="742.5" y="56.5" width="14.5" height="15" fill="#fff" stroke="#555" stroke-width="1"/>
<rect x="746" y="61" width="11" height="10.5" fill="#5aaee8"/><path d="M746 61 l11 10.5 M757 61 l-11 10.5" stroke="#333" stroke-width=".9"/>
<rect x="742.5" y="56.5" width="14.5" height="15" fill="none" stroke="#555" stroke-width="1"/><rect x="742.5" y="60.5" width="3.5" height="11" fill="#fff" stroke="#555" stroke-width="1"/>
<!-- room separator -->
<rect x="742.5" y="80.5" width="14.5" height="15" fill="#fff" stroke="#555" stroke-width="1"/><rect x="742.5" y="84.5" width="3.5" height="11" fill="#fff" stroke="#555" stroke-width="1"/>
<rect x="746.5" y="85" width="9" height="3" fill="#5aaee8"/><path d="M747 90 h5" stroke="#1e88e5" stroke-width="1"/>
<path d="M749 95 L756 88 L758.5 90.5 L751.5 97.5 L748.5 97.5z" fill="#f5c242" stroke="#8a6a10" stroke-width=".6"/><rect x="755.5" y="86.5" width="3" height="3" fill="#e83030" transform="rotate(45 757 88)"/>
<!-- tag room -->
<rect x="742.5" y="104.5" width="14.5" height="15" fill="#fff" stroke="#555" stroke-width="1"/><rect x="742.5" y="108.5" width="3.5" height="11" fill="#fff" stroke="#555" stroke-width="1"/>
<rect x="746.5" y="109" width="9" height="6" fill="#5aaee8"/>
<rect x="750.5" y="114.5" width="8" height="6" fill="#fff" stroke="#555" stroke-width="1"/><path d="M754 116 l-1.5 1.5 h3" stroke="#555" stroke-width=".8" fill="none"/>
<!-- area -->
<rect x="861" y="56" width="15" height="15" fill="#fbd072" stroke="#8a7040" stroke-width="1"/><path d="M861 56 l15 15 M876 56 l-15 15 M861 60 h15 M864.5 56 v15" stroke="#6b5530" stroke-width=".8"/>
<!-- area boundary grey -->
<g opacity=".35"><rect x="861" y="80" width="15" height="14" fill="#ddd" stroke="#777" stroke-width="1"/><path d="M861 80 l15 14 M876 80 l-15 14" stroke="#777" stroke-width=".8"/><path d="M866 96 l8 -8 2 2 -8 8z" fill="#999"/></g>
<!-- tag area -->
<rect x="861" y="104" width="15" height="15" fill="#fbd072" stroke="#8a7040" stroke-width="1"/><path d="M861 104 l15 15 M876 104 l-15 15 M861 108 h15 M864.5 104 v15" stroke="#6b5530" stroke-width=".8"/>
<circle cx="873" cy="118" r="3" fill="#fff" stroke="#555" stroke-width="1"/>
<!-- by face -->
<path d="M994 63 L1000 56.5 H1006 V62 L997.5 66 Z" fill="#d4d4d4" stroke="#666" stroke-width="1" stroke-linejoin="round"/>
<path d="M977 85 V77 L985.5 70.5 L989.5 75.5 L981 85 Z" fill="#d4d4d4" stroke="#666" stroke-width="1" stroke-linejoin="round"/>
<path d="M997.5 60 V65 M1000.5 57 V64 M1003.5 57 V63 M979.5 76 V85 M982.5 73.5 V82 M985.5 71 V78.5" stroke="#777" stroke-width=".8"/>
<path d="M981.5 60 L1001 79" stroke="#1e88e5" stroke-width="1.4"/><path d="M980 58.5 l5 .8 -4 3.5z M1002.5 80.5 l-5 -.8 4 -3.5z" fill="#1e88e5"/>
<!-- shaft -->
<g fill="#d0d0d0" stroke="#666" stroke-width=".9"><rect x="1015.5" y="61.5" width="6" height="6"/><rect x="1037.5" y="61.5" width="6" height="6"/><rect x="1015.5" y="72.5" width="6" height="6"/><rect x="1037.5" y="72.5" width="6" height="6"/></g>
<path d="M1016 66 l4 -4 M1017 67 l4 -4 M1038 66 l4 -4 M1039 67 l4 -4 M1016 77 l4 -4 M1017 78 l4 -4 M1038 77 l4 -4 M1039 78 l4 -4" stroke="#777" stroke-width=".7"/>
<path d="M1021.5 61.5 H1037.5 M1021.5 67.5 H1037.5 M1021.5 72.5 H1037.5 M1021.5 78.5 H1037.5" stroke="#777" stroke-width=".8"/>
<path d="M1029.5 57 V84" stroke="#1e88e5" stroke-width="1.4"/><path d="M1026.5 58.5 l3 -3.5 3 3.5z M1026.5 82.5 l3 3.5 3 -3.5z" fill="#1e88e5"/>
<!-- wall opening -->
<path d="M1055 63.5 H1068" stroke="#1e88e5" stroke-width="1.1"/><path d="M1054.5 63.5 l2.5 -2 v4z M1068.5 63.5 l-2.5 -2 v4z" fill="#1e88e5"/>
<rect x="1059.5" y="56.5" width="4" height="4" fill="none" stroke="#555" stroke-width=".9"/><rect x="1059.5" y="66.5" width="4" height="4" fill="none" stroke="#555" stroke-width=".9"/>
<!-- vertical -->
<path d="M1054.5 83 l4 -2 1 4 -4 2z M1063.5 87 l4 -2 1 4 -4 2z" fill="#ccc" stroke="#555" stroke-width=".9"/><path d="M1061.5 81 V95" stroke="#1e88e5" stroke-width="1.1"/><path d="M1059.5 82.5 l2 -2.5 2 2.5z M1059.5 93.5 l2 2.5 2 -2.5z" fill="#1e88e5"/>
<!-- dormer -->
<path d="M1057.5 119 V107.5 H1069" stroke="#1e88e5" stroke-width="1.2" fill="none"/><path d="M1055 117 l13 -12 M1058 119 l11 -10" stroke="#999" stroke-width=".8" stroke-dasharray="1.5 1"/>
<!-- level grey -->
<g opacity=".35"><path d="M1130 76 h8" stroke="#555" stroke-dasharray="2 1"/><path d="M1141 72 l4 4 -4 4 -4 -4z" fill="#666"/></g>
<!-- grid -->
<g fill="none" stroke="#555" stroke-width="1"><circle cx="1133" cy="95" r="2.3"/><circle cx="1138" cy="95" r="2.3"/><circle cx="1143" cy="95" r="2.3"/><circle cx="1133" cy="105" r="2.3"/><path d="M1138 97.5 V108 M1143 97.5 V108 M1135.5 100.5 H1146 M1135.5 104.5 H1146"/></g>
<!-- set -->
<path d="M1193.5 70.5 L1198 65.5 H1213 V81 L1208.5 86 H1193.5 Z" fill="#e6e6e6" stroke="#777" stroke-width="1"/>
<path d="M1193.5 70.5 H1208.5 V86 M1208.5 70.5 L1213 65.5" fill="none" stroke="#777" stroke-width="1"/>
<path d="M1200 60.5 L1221.5 55.5 V79.5 L1200 85 Z" fill="#7fb8ec" fill-opacity=".8" stroke="#1e88e5" stroke-width="1.1"/>
<path d="M1207.2 58.8 V83.2 M1214.4 57.2 V81.4 M1200 68.7 L1221.5 63.5 M1200 76.8 L1221.5 71.5" stroke="#1e88e5" stroke-width="1"/>
<!-- show -->
<path d="M1232.5 58 L1245 56.5 V69 L1232.5 71 Z" fill="#fff" stroke="#555" stroke-width="1"/><path d="M1236.5 57.5 V70.5 M1240.5 57 V70 M1232.5 62.5 H1245 M1232.5 66.5 H1245" stroke="#555" stroke-width=".8"/>
<circle cx="1245" cy="65" r="3.2" fill="#f7b733"/><rect x="1244" y="68" width="2" height="2" fill="#555"/>
<!-- ref plane -->
<path d="M1236 82.5 H1247 M1233 92.5 H1243 M1238 81 L1234 94 M1246 81 L1242 94" stroke="#555" stroke-width="1"/>
<path d="M1240 95.5 L1246.5 89 L1248.5 91 L1242 97.5 H1240 Z" fill="#f5c242" stroke="#8a6a10" stroke-width=".5"/><rect x="1246" y="87.5" width="2.5" height="2.5" fill="#e53030" transform="rotate(45 1247.5 89)"/>
<!-- viewer -->
<rect x="1232.5" y="104.5" width="15" height="15" fill="#fff" stroke="#555" stroke-width="1"/><rect x="1232.5" y="104.5" width="15" height="1.8" fill="#555"/>
<path d="M1236 110 L1238 108 H1244 V114 L1242 116 H1236 Z" fill="#45b866" stroke="#2f7d45" stroke-width=".6"/>
</svg>

<div class="t12" style="left:632.5px;top:3.6px;color:#3c3c3c;letter-spacing:-0.15px">Autodesk Revit 2024 - dynamo - Floor Plan: P-Sleeve-Level 0</div>
<div class="t12" style="left:1070px;top:7.2px;color:#333;letter-spacing:-0.3px">Sign In</div>
<!-- tabs -->
<div class="t12" style="left:14px;top:32.7px;color:#fff">File</div>
<div class="t12" style="left:57px;top:32.7px">Architecture</div>
<div class="t12" style="left:142px;top:32.7px">Structure</div>
<div class="t12" style="left:210px;top:32.7px">Steel</div>
<div class="t12" style="left:255px;top:32.7px">Precast</div>
<div class="t12" style="left:312px;top:32.7px">Systems</div>
<div class="t12" style="left:376px;top:32.7px">Insert</div>
<div class="t12" style="left:425px;top:32.7px">Annotate</div>
<div class="t12" style="left:494px;top:32.7px">Analyze</div>
<div class="t12" style="left:555px;top:32.7px">Massing &amp; Site</div>
<div class="t12" style="left:654px;top:32.7px">Collaborate</div>
<div class="t12" style="left:735px;top:32.7px">View</div>
<div class="t12" style="left:780px;top:32.7px">Manage</div>
<div class="t12" style="left:843px;top:32.7px">Add-Ins</div>
<div class="t12" style="left:905px;top:32.7px">Modify</div>
<!-- ribbon large labels -->
<div class="t12" style="left:10.5px;top:91.5px">Modify</div>
<div class="t12" style="left:6.5px;top:127.5px">Select</div>
<div class="t12" style="left:70.5px;top:91.5px">Wall</div>
<div class="t12" style="left:110.5px;top:91.5px">Door</div>
<div class="t12" style="left:146.5px;top:91.5px">Window</div>
<div class="t12" style="left:204.5px;top:91.5px">Component</div>
<div class="t12" style="left:290px;top:91.5px">Column</div>
<div class="t12" style="left:280px;top:127.5px">Build</div>
<div class="t12" style="left:370.3px;top:57.5px">Roof</div>
<div class="t12" style="left:370.3px;top:81.6px">Ceiling</div>
<div class="t12" style="left:370.3px;top:105.5px">Floor</div>
<div class="t12" style="left:440.5px;top:57.5px;word-spacing:1.5px">Curtain System</div>
<div class="t12" style="left:440.5px;top:81.6px;word-spacing:1.5px">Curtain Grid</div>
<div class="t12" style="left:440.5px;top:105.5px">Mullion</div>
<div class="t12" style="left:559px;top:57.5px">Railing</div>
<div class="t12" style="left:559px;top:81.6px">Ramp</div>
<div class="t12" style="left:559px;top:105.5px">Stair</div>
<div class="t12" style="left:543.5px;top:127.5px">Circulation</div>
<div class="t12" style="left:643.4px;top:57.5px;word-spacing:2px">Model Text</div>
<div class="t12" style="left:643.4px;top:81.6px;word-spacing:2px">Model Line</div>
<div class="t12" style="left:643.4px;top:105.5px;word-spacing:2px">Model Group</div>
<div class="t12" style="left:657.5px;top:127.5px">Model</div>
<div class="t12" style="left:763.4px;top:57.5px">Room</div>
<div class="t12" style="left:763.4px;top:81.6px">Room Separator</div>
<div class="t12" style="left:763.4px;top:105.5px;word-spacing:2px">Tag Room</div>
<div class="t12" style="left:882.4px;top:57.5px">Area</div>
<div class="t12" style="left:882.4px;top:81.6px;color:#c4c4c4">Area Boundary</div>
<div class="t12" style="left:882.4px;top:105.5px;word-spacing:2px">Tag Area</div>
<div class="t12" style="left:810.6px;top:127.5px">Room &amp; Area</div>
<div class="t12" style="left:985.7px;top:91.5px">By</div>
<div class="t12" style="left:980px;top:106.1px">Face</div>
<div class="t12" style="left:1016.4px;top:91.5px">Shaft</div>
<div class="t12" style="left:1075.4px;top:57.5px">Wall</div>
<div class="t12" style="left:1075.4px;top:81.6px">Vertical</div>
<div class="t12" style="left:1075.4px;top:105.5px">Dormer</div>
<div class="t12" style="left:1023.7px;top:127.5px">Opening</div>
<div class="t12" style="left:1151px;top:69.5px;color:#c4c4c4">Level</div>
<div class="t12" style="left:1151px;top:93.5px">Grid</div>
<div class="t12" style="left:1137.5px;top:127.5px">Datum</div>
<div class="t12" style="left:1200px;top:91.5px">Set</div>
<div class="t12" style="left:1253px;top:57.5px">Show</div>
<div class="t12" style="left:1253px;top:81.6px;word-spacing:2px">Ref Plane</div>
<div class="t12" style="left:1253px;top:105.5px">Viewer</div>
<div class="t12" style="left:1219.4px;top:127.5px">Work Plane</div>

<!--TEXTS-->
<!-- DIALOG -->
<div class="a" style="left:37px;top:172px;width:532px;height:418px;border:4.5px solid rgba(255,255,255,0.85);border-left-width:2.5px;border-radius:8px"></div>
<div class="a" style="left:41.5px;top:176.5px;width:518.5px;height:404.5px;background:linear-gradient(to bottom,rgba(0,0,0,0) 0,rgba(0,0,0,0) 100%);box-shadow:inset 0 0 0 0 #000"></div>
<div class="a" style="left:39.5px;top:176.5px;width:521px;height:4.5px;background:linear-gradient(to bottom,rgba(0,0,0,.05),rgba(0,0,0,.4))"></div>
<div class="a" style="left:39.5px;top:181px;width:5.5px;height:400px;background:linear-gradient(to right,rgba(0,0,0,0),rgba(0,0,0,.37))"></div>
<div class="a" style="left:39.5px;top:581px;width:178px;height:9px;background:linear-gradient(to bottom,rgba(0,0,0,.5),rgba(0,0,0,.2) 40%,rgba(0,0,0,0))"></div>
<div class="a" style="left:45px;top:181px;width:515px;height:400px;background:#e6e6e6"></div>
<!-- title frame -->
<div class="a" style="left:45px;top:181px;width:515px;height:50px;border:1.5px solid #b6d0d7;border-bottom:2.5px solid #b3ced6;border-right:2px solid #b6d0d7;border-radius:5px;background:#e6e6e6"></div><div class="a" style="left:47px;top:231px;width:511px;height:1px;background:#fafafa"></div>
<div class="a" style="left:97px;top:186px;width:461px;height:40px;background:#7b8d9c"></div>
<div class="a" style="left:455px;top:188px;width:103px;height:36px;background:#bcd1d6"></div>
<div class="a" style="left:460px;top:192px;width:28px;height:28px;background:#e6e6e6;border:1px solid #777"></div>
<div class="a" style="left:493px;top:192px;width:28px;height:28px;background:#e6e6e6;border:1px solid #777"></div>
<div class="a" style="left:526px;top:192px;width:28px;height:28px;background:#e6e6e6;border:1px solid #777"></div>
<svg style="left:45px;top:181px" width="515" height="50" viewBox="45 181 515 50">
<rect x="470" y="211" width="11" height="2.2" fill="#777"/>
<rect x="501.5" y="202.5" width="11.5" height="10" fill="none" stroke="#777" stroke-width="1.4"/><rect x="501" y="202" width="12.5" height="2" fill="#777"/>
<path d="M534.5 201 L545.5 212 M545.5 201 L534.5 212" stroke="#7a7a7a" stroke-width="2.2"/>
<!-- logo -->
<g fill="none" stroke="#8e8623" stroke-width="1.3" stroke-linecap="round">
<path d="M60 188.5 Q70 187.3 78.5 189.5"/>
<path d="M79.2 189 L79.3 197.5"/>
<path d="M78.5 189.5 Q81.5 196 76 199.3 Q70 200.6 62 199.5"/>
<path d="M60 188.5 Q61 200 60 211.5"/>
<path d="M60.5 189 L71 201.5"/>
<ellipse cx="70" cy="208.6" rx="12.5" ry="7.8"/>
<path d="M68 199.5 Q64.5 205 69 209 Q74 212.3 80.5 210.5"/>
<path d="M68 201.5 L79.5 208.5"/>
<path d="M60.8 211 H66"/>
</g>
</svg>
<div class="a" style="left:112px;top:195.7px;font-size:18px;line-height:18px;color:#f3f3f3;letter-spacing:-0.36px">Vertical and Mirror alignment of tags</div>
<!-- properties group -->
<div class="a" style="left:58px;top:263px;width:490px;height:148px;border:1px solid #bcd3d9;border-radius:5px"></div>
<div class="a" style="left:59px;top:264px;width:488px;height:146px;border:2.5px solid #fdfdfd;border-radius:4px"></div>
<div class="a" style="left:61.5px;top:266.5px;width:483px;height:141px;border:1px solid #b9cfd5;background:#7b8d9c"></div>
<div class="a" style="left:65px;top:250px;width:396px;height:21.5px;background:#bcd0d5;border:1px solid #6e6e6e"></div>
<div class="a" style="left:71.5px;top:254.3px;font-size:14px;line-height:14px;font-weight:bold;color:#2f4d4f">Properties</div>
<svg style="left:60px;top:270px" width="480" height="130" viewBox="60 270 480 130">
<circle cx="79.2" cy="284.3" r="5.6" fill="#6496ee" stroke="#5b6670" stroke-width="1"/>
<circle cx="79.2" cy="320.4" r="5.6" fill="#6496ee" stroke="#5b6670" stroke-width="1"/><circle cx="79.2" cy="320.4" r="3" fill="#141414"/>
<circle cx="80.2" cy="373.5" r="5.6" fill="#6496ee" stroke="#5b6670" stroke-width="1"/><circle cx="80.2" cy="373.5" r="3" fill="#141414"/>
<circle cx="362" cy="373.5" r="5.6" fill="#6496ee" stroke="#5b6670" stroke-width="1"/>
</svg>
<div class="a" style="left:91.4px;top:277.6px;font-size:17px;line-height:17px;color:#f4f4f4;letter-spacing:0.02px">Vertical Alignment</div>
<div class="a" style="left:91.4px;top:313.7px;font-size:17px;line-height:17px;color:#f4f4f4;letter-spacing:0.2px">Mirror Alignment</div>
<!-- sub group -->
<div class="a" style="left:66.5px;top:348.5px;width:469.5px;height:53px;border:1px solid #c5d8dd;border-radius:4px"></div>
<div class="a" style="left:67.5px;top:349.5px;width:467.5px;height:51px;border:2px solid #fafafa;border-radius:3px"></div>
<div class="a" style="left:69.5px;top:351.5px;width:463.5px;height:47px;border:1px solid #a8bfc6"></div>
<div class="a" style="left:75px;top:338.5px;width:379.5px;height:19px;background:#bcd0d5;border:1px solid #6e6e6e"></div>
<div class="a" style="left:77.5px;top:341.2px;font-size:12.7px;line-height:12.7px;font-weight:bold;color:#2f4d4f;letter-spacing:-0.15px">Please select the mirror alignment method</div>
<svg style="left:60px;top:270px" width="480" height="130" viewBox="60 270 480 130">
<circle cx="80.2" cy="373.5" r="5.6" fill="#6496ee" stroke="#5b6670" stroke-width="1"/><circle cx="80.2" cy="373.5" r="3" fill="#141414"/>
<circle cx="362" cy="373.5" r="5.6" fill="#6496ee" stroke="#5b6670" stroke-width="1"/>
</svg>
<div class="a" style="left:92.4px;top:366.3px;font-size:15px;line-height:15px;color:#f4f4f4;letter-spacing:-0.08px">Mirror-Pick Axis</div>
<div class="a" style="left:374.2px;top:366.3px;font-size:15px;line-height:15px;color:#f4f4f4;letter-spacing:0.04px">Mirror-Draw Axis</div>
<svg style="left:202px;top:362px" width="26" height="26" viewBox="0 0 26 26">
<rect width="26" height="26" fill="#fff"/>
<path d="M4 5 H9 L11.5 8.5 V15 H9 V21 H4 Z" fill="#e4e8ee" stroke="#555" stroke-width="1"/>
<rect x="12" y="3" width="1.5" height="20" fill="#3cb043"/><rect x="12" y="10" width="1.5" height="2" fill="#fff"/>
<path d="M22 5 H17 L14.5 8.5 V21 H22 Z" fill="#dcecfa" stroke="#8dc0ee" stroke-width="1"/>
<path d="M13.5 10 L13.5 20 L15.5 18 L17 21 L18.5 20.3 L17 17.5 L19.5 17.3 Z" fill="#fff" stroke="#444" stroke-width=".8"/>
</svg>
<svg style="left:493px;top:362px" width="26" height="26" viewBox="0 0 26 26">
<rect width="26" height="26" fill="#fff"/>
<path d="M3.5 4 H9 L11.5 7.5 V15 H9 V21 H3.5 Z" fill="#e4e8ee" stroke="#555" stroke-width="1"/>
<rect x="12" y="3" width="1.8" height="20" fill="#3d8de6"/>
<path d="M22 4 H17 L14.5 7.5 V21 H22 Z" fill="#dcecfa" stroke="#8dc0ee" stroke-width="1"/>
<path d="M13 23 L14 19.5 L21.5 12 L24 14.5 L16.5 22 Z" fill="#f2c230" stroke="#8a6a10" stroke-width=".7"/><path d="M21.5 12 L23 10.5 L25.5 13 L24 14.5 Z" fill="#b5542a"/>
</svg>
<!-- lower group -->
<div class="a" style="left:58px;top:432.5px;width:486px;height:83px;border:1px solid #bcd3d9;border-radius:5px"></div>
<div class="a" style="left:59px;top:433.5px;width:484px;height:81px;border:2.5px solid #fdfdfd;border-radius:4px"></div>
<div class="a" style="left:61.5px;top:436px;width:479px;height:76.5px;border:1px solid #b9cfd5;background:#7b8d9c"></div>
<div class="a" style="left:65px;top:419px;width:381.5px;height:21.5px;background:#bcd0d5;border:1px solid #6e6e6e"></div>
<div class="a" style="left:66.9px;top:423.4px;font-size:14px;line-height:14px;font-weight:bold;color:#2f4d4f;letter-spacing:0.13px">If you want to align vertically, please enter the distance.</div>
<div class="a" style="left:69.4px;top:467.8px;font-size:16.5px;line-height:16.5px;color:#f4f4f4;letter-spacing:-0.05px">Distance between Tags</div>
<div class="a" style="left:262.5px;top:469.5px;width:255px;height:16px;background:#fff"></div>
<div class="a" style="left:267.3px;top:472px;font-size:9.5px;line-height:9.5px;font-weight:bold;color:#000">1800</div>
<!-- buttons -->
<div class="a" style="left:85px;top:531px;width:112.5px;height:35px;border:2px solid #b8d1d7;background:linear-gradient(to bottom,#7b8d9c 0%,#7b8d9c 45%,#747474 85%,#747171 100%)"></div>
<div class="a" style="left:85px;top:540.8px;width:112.5px;text-align:center;font-size:14.7px;line-height:14.7px;font-weight:bold;color:#fff">Multiple Align</div>
<div class="a" style="left:242px;top:531px;width:117px;height:35px;border:2px solid #2f73a9;background:#bee6fb"></div>
<div class="a" style="left:242px;top:540.3px;width:117px;text-align:center;font-size:15px;line-height:15px;font-weight:bold;color:#fff">Align</div>
<div class="a" style="left:401.5px;top:531px;width:118px;height:35px;border:2px solid #b8d1d7;background:linear-gradient(to bottom,#7b8d9c 0%,#7b8d9c 45%,#747474 85%,#747171 100%)"></div>
<div class="a" style="left:401.5px;top:540.3px;width:118px;text-align:center;font-size:15px;line-height:15px;font-weight:bold;color:#fff">Cancel</div>
<svg style="left:555px;top:575px" width="14" height="14" viewBox="555 575 14 14"><g fill="#9bb"><rect x="564" y="579" width="1.2" height="1.2"/><rect x="562" y="581" width="1.2" height="1.2"/><rect x="564" y="581" width="1.2" height="1.2"/><rect x="560" y="583" width="1.2" height="1.2"/><rect x="562" y="583" width="1.2" height="1.2"/><rect x="564" y="583" width="1.2" height="1.2"/></g></svg>

</body></html>
